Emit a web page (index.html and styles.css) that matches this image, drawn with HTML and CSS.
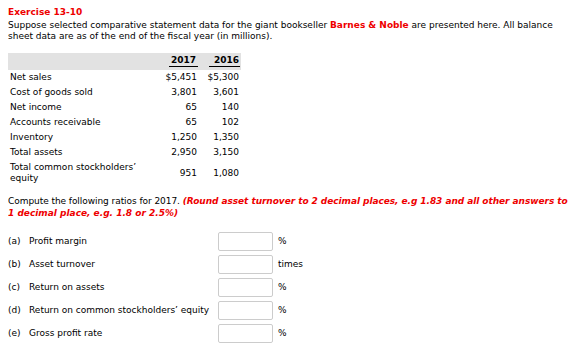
FILE: index.html
```html
<!DOCTYPE html>
<html>
<head>
<meta charset="utf-8">
<link rel="stylesheet" href="styles.css">
</head>
<body>
<div class="title">Exercise 13-10</div>
<p class="intro"><span class="ln">Suppose selected comparative statement data for the giant bookseller <b class="red">Barnes &amp; Noble</b> are presented here. All balance</span><br><span class="ln">sheet data are as of the end of the fiscal year (in millions).</span></p>

<div class="data">
  <div class="hd"></div>
  <div class="hd yr"><span>2017</span></div>
  <div class="hd yr last"><span>2016</span></div>

  <div class="lbl">Net sales</div><div class="v">$5,451</div><div class="v last">$5,300</div>
  <div class="lbl">Cost of goods sold</div><div class="v">3,801</div><div class="v last">3,601</div>
  <div class="lbl">Net income</div><div class="v">65</div><div class="v last">140</div>
  <div class="lbl">Accounts receivable</div><div class="v">65</div><div class="v last">102</div>
  <div class="lbl">Inventory</div><div class="v">1,250</div><div class="v last">1,350</div>
  <div class="lbl">Total assets</div><div class="v">2,950</div><div class="v last">3,150</div>
  <div class="lbl">Total common stockholders’<br>equity</div><div class="v">951</div><div class="v last">1,080</div>
</div>

<p class="compute"><span class="l1">Compute the following ratios for 2017. <i class="note">(Round asset turnover to 2 decimal places, e.g 1.83 and all other answers to</i></span><br><i class="note">1 decimal place, e.g. 1.8 or 2.5%)</i></p>

<div class="answers">
  <div class="row"><div class="q"><span class="k">(a)</span>Profit margin</div><input class="box" type="text"><span class="unit">%</span></div>
  <div class="row"><div class="q"><span class="k">(b)</span>Asset turnover</div><input class="box" type="text"><span class="unit">times</span></div>
  <div class="row"><div class="q"><span class="k">(c)</span>Return on assets</div><input class="box" type="text"><span class="unit">%</span></div>
  <div class="row"><div class="q"><span class="k">(d)</span>Return on common stockholders’ equity</div><input class="box" type="text"><span class="unit">%</span></div>
  <div class="row"><div class="q"><span class="k">(e)</span>Gross profit rate</div><input class="box" type="text"><span class="unit">%</span></div>
</div>
</body>
</html>
```

FILE: styles.css
```css
html, body {
  background: #fff;
}
body {
  margin: 7px 8px 6px 8px;
  font-family: "DejaVu Sans", Verdana, sans-serif;
  font-size: 9px;
  line-height: 11px;
  color: #000;
}
.title {
  font-weight: bold;
  color: #e00;
}
.red {
  color: #e00;
}
.intro {
  margin: 2px 0 0 0;
}
.ln {
  white-space: nowrap;
}
.data {
  margin-top: 11px;
  display: grid;
  grid-template-columns: 152px 40px 41px;
  width: 233px;
}
.hd {
  background: #e2e2e2;
  padding: 2px 0 2px 0;
  height: 13px;
}
.yr span {
  display: block;
  margin: 0 2px 0 9px;
  border-bottom: 1px solid #000;
  text-align: right;
  padding-right: 2px;
  font-weight: bold;
}
.yr.last span {
  margin: 0 1px 0 9px;
  padding-right: 1px;
}
.lbl {
  padding: 2px 0 2px 2px;
}
.v {
  padding: 2px 3px 2px 0;
  text-align: right;
  align-self: center;
}
.v.last {
  padding-right: 2px;
}
.compute {
  margin: 10px 0 0 0;
  line-height: 11.5px;
}
.l1 {
  white-space: nowrap;
  letter-spacing: -0.06px;
}
.note {
  color: #e00;
  font-weight: bold;
}
.answers {
  margin-top: 13px;
  display: flex;
  flex-direction: column;
  gap: 4px;
}
.row {
  display: flex;
  align-items: center;
  height: 19px;
}
.q {
  width: 210px;
}
.k {
  display: inline-block;
  width: 21px;
}
.box {
  box-sizing: border-box;
  width: 55px;
  height: 19px;
  margin: 0;
  padding: 0 3px;
  border: 1px solid #ccc;
  border-radius: 2px;
  background: #fff;
  font: inherit;
}
.unit {
  margin-left: 5px;
}
```
